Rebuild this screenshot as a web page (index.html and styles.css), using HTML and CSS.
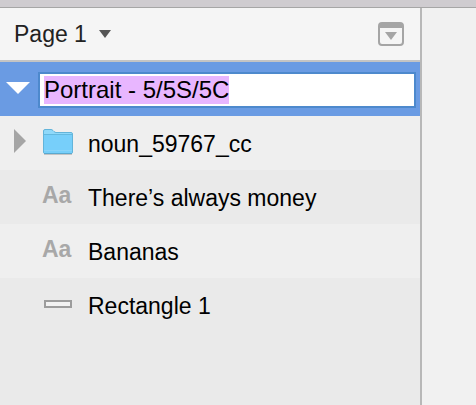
FILE: index.html
```html
<!DOCTYPE html>
<html lang="en">
<head>
<meta charset="utf-8">
<title>Layers</title>
<link rel="stylesheet" href="styles.css">
</head>
<body>
<div class="toolbar"></div>
<div class="workspace">
  <aside class="sidebar">
    <header class="pages">
      <button class="page-menu" type="button">Page 1
        <svg width="12" height="8" viewBox="0 0 12 8" aria-hidden="true"><path d="M0 0H12L6 8Z" fill="#555"/></svg>
      </button>
      <button class="toggle" type="button" aria-label="Toggle page list">
        <svg width="26" height="24" viewBox="0 0 26 24" aria-hidden="true"><rect x="1" y="1" width="24" height="22" rx="3" fill="none" stroke="#a5a5a5" stroke-width="2"/><path d="M1 6V4Q1 1 4 1H22Q25 1 25 4V6Z" fill="#a5a5a5"/><path d="M7 10H19L13 18Z" fill="#a5a5a5"/></svg>
      </button>
    </header>
    <ul class="layers">
      <li class="layer selected">
        <button class="disclosure" type="button" aria-label="Collapse artboard">
          <svg width="24" height="12" viewBox="0 0 24 12" aria-hidden="true"><path d="M0 0H24L12 12Z" fill="#fff"/></svg>
        </button>
        <input class="rename" type="text" aria-label="Artboard name" value="Portrait - 5/5S/5C">
      </li>
      <li class="layer">
        <button class="disclosure closed" type="button" aria-label="Expand group">
          <svg width="12" height="24" viewBox="0 0 12 24" aria-hidden="true"><path d="M0 0L12 12L0 24Z" fill="#a5a5a5"/></svg>
        </button>
        <span class="icon">
          <svg width="30" height="26" viewBox="0 0 30 26" aria-hidden="true"><path d="M1 25.5H29" stroke="#c4c4c4"/><path d="M.5 23V2Q.5.5 2 .5H8Q9 .5 10 1.5L11 2.5Q12 3.5 13 3.5H28Q29.500 3.500 29.500 5V23Q29.500 24.500 28 24.500H2Q.5 24.500 .5 23Z" fill="#8fd9fa" stroke="#62b4da"/><path d="M1 6H29V23Q29 24 28 24H2Q1 24 1 23Z" fill="#77cffa"/><path d="M1 5.500H29" stroke="#64b9df"/><path d="M1 21.500H29" stroke="#8ad4f8"/><path d="M1 24.500H29" stroke="#5aa9cf"/></svg>
        </span>
        <span class="name">noun_59767_cc</span>
      </li>
      <li class="layer">
        <span class="icon type">Aa</span>
        <span class="name">There’s always money</span>
      </li>
      <li class="layer">
        <span class="icon type">Aa</span>
        <span class="name">Bananas</span>
      </li>
      <li class="layer">
        <span class="icon">
          <svg width="30" height="8" viewBox="0 0 30 8" aria-hidden="true"><rect x="2" y="1" width="26" height="6" fill="#f2f2f2" stroke="#9c9c9c" stroke-width="2"/></svg>
        </span>
        <span class="name">Rectangle 1</span>
      </li>
    </ul>
  </aside>
  <main class="canvas"></main>
</div>
<script src="script.js"></script>
</body>
</html>
```
FILE: styles.css
```css
* {
  box-sizing: border-box;
}

body {
  display: flex;
  flex-direction: column;
  min-height: 100vh;
  margin: 0;
  background: #f1f1f1;
  color: #000;
  font: 23px/28px "Liberation Sans", Arial, sans-serif;
}

button {
  display: flex;
  align-items: center;
  padding: 0;
  border: 0;
  background: none;
  color: inherit;
  font: inherit;
}

svg {
  display: block;
}

.toolbar {
  height: 8px;
  border-bottom: 1px solid #a6a6a6;
  background: #cfccd0;
}

.workspace {
  display: flex;
  flex: 1;
}

.sidebar {
  flex: 8;
  border-right: 2px solid #b8b8b8;
  background: #eaeaea;
}

.canvas {
  flex: 1;
  min-width: 54px;
}

.pages {
  display: flex;
  align-items: center;
  justify-content: space-between;
  padding: 12px 16px 12px 14px;
  border-bottom: 2px solid #c4c4c4;
  background: #f5f5f5;
}

.page-menu {
  gap: 12px;
  color: #222;
}

.layers {
  margin: 0;
  padding: 0;
  list-style: none;
}

.layer {
  display: grid;
  grid-template-columns: 38px 50px 1fr;
  align-items: center;
  height: 54px;
}

.layer:nth-child(even) {
  background: #efefef;
}

.layer.selected {
  grid-template-columns: 38px 1fr;
  padding: 2px 4px 0 0;
  background: #6a9be3;
}

.disclosure {
  padding: 0 0 4px 6px;
}

.disclosure.closed {
  padding-left: 14px;
}

.icon {
  grid-column: 2;
  padding: 0 0 2px 5px;
}

.type {
  padding: 0 0 4px 4px;
  color: #a8a8a8;
  font-weight: bold;
}

.name {
  grid-column: 3;
  padding-top: 2px;
}

.rename {
  width: 100%;
  height: 36px;
  margin: 0;
  padding: 0 4px;
  border: 2px solid #4d89cd;
  border-radius: 0;
  outline: 0;
  background: #fff;
  color: #000;
  font: inherit;
  font-size: 24px;
  caret-color: transparent;
}

.rename::selection {
  background: rgba(232, 182, 255, 0.996);
  color: #000;
}
```
FILE: script.js
```js
const rename = document.querySelector(".rename");
rename.focus();
rename.select();
```
